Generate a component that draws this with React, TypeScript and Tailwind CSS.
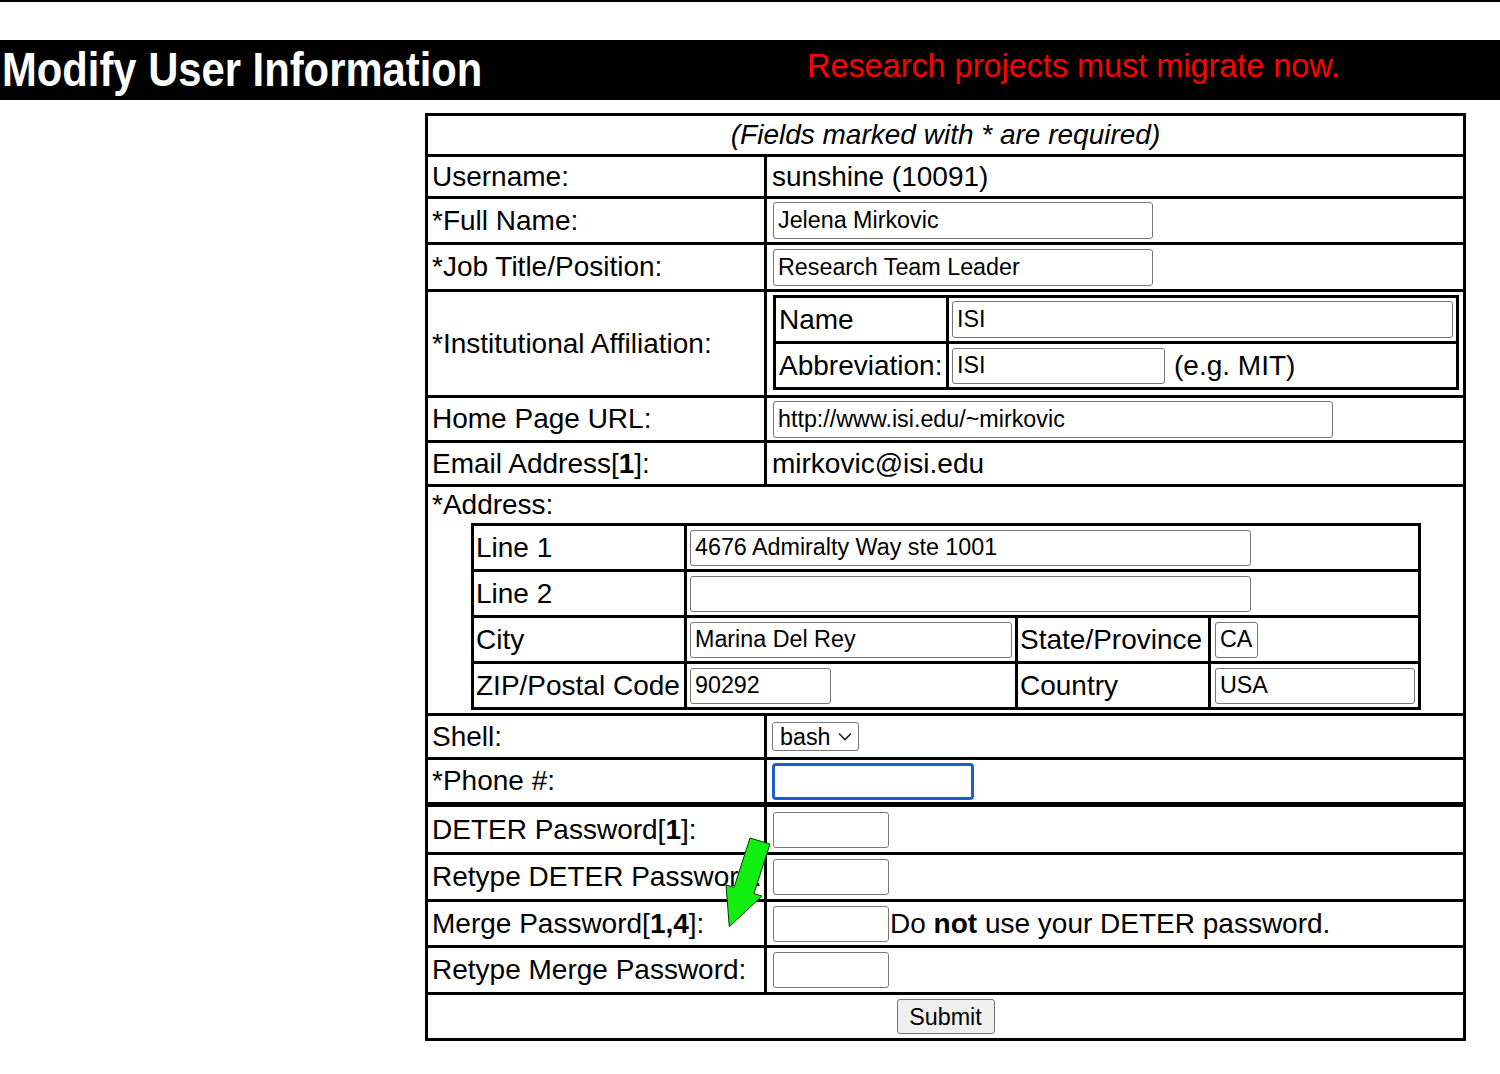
import React from "react";

const FONT = { fontFamily: '"Liberation Sans", Arial, Helvetica, sans-serif' };

function Inp({ v = "", w, h = "h-[37px]" }: { v?: string; w: string; h?: string }) {
  return (
    <input
      readOnly
      defaultValue={v}
      className={`${w} ${h} shrink-0 border border-[#767676] rounded-[3px] px-[4px] text-[23.3px] text-black bg-white outline-none`}
      style={FONT}
    />
  );
}

function Row({
  h,
  label,
  children,
  border = "border-b-[3px]",
}: {
  h: string;
  label: React.ReactNode;
  children?: React.ReactNode;
  border?: string;
}) {
  return (
    <div className={`flex ${h} ${border} border-black`}>
      <div className="w-[339px] shrink-0 border-r-[3px] border-black flex items-center pl-[4px] whitespace-nowrap">
        {label}
      </div>
      <div className="flex-1 flex items-center pl-[5px] whitespace-nowrap">{children}</div>
    </div>
  );
}

export default function App() {
  return (
    <div className="relative w-[1500px] min-h-[1074px] bg-white text-black text-[28px] leading-[32px]" style={FONT}>
      <div className="h-[2px] bg-black" />
      <div className="h-[38px]" />
      <div className="h-[60px] bg-black flex items-center">
        <div className="w-[807px] shrink-0 pl-[2px]">
          <div className="text-white font-bold text-[48px] leading-[54px] whitespace-nowrap origin-left scale-x-[0.87]">
            Modify User Information
          </div>
        </div>
        <div className="text-[#ff0000] text-[32.4px] leading-[36px] pb-[8px] whitespace-nowrap">
          Research projects must migrate now.
        </div>
      </div>

      <div className="ml-[425px] mt-[13px] w-[1041px] border-[3px] border-black">
        <div className="h-[41px] border-b-[3px] border-black flex items-center justify-center italic">
          (Fields marked with * are required)
        </div>
        <Row h="h-[42px]" label="Username:">
          sunshine (10091)
        </Row>
        <Row h="h-[46px]" label="*Full Name:">
          <span className="pl-[1px] flex">
            <Inp v="Jelena Mirkovic" w="w-[380px]" />
          </span>
        </Row>
        <Row h="h-[47px]" label="*Job Title/Position:">
          <span className="pl-[1px] flex">
            <Inp v="Research Team Leader" w="w-[380px]" />
          </span>
        </Row>
        <div className="flex h-[106px] border-b-[3px] border-black">
          <div className="w-[339px] shrink-0 border-r-[3px] border-black flex items-center pl-[4px] whitespace-nowrap">
            *Institutional Affiliation:
          </div>
          <div className="flex-1 flex items-center pl-[6px] pr-[4px] pb-[2px]">
            <div className="w-full border-[3px] border-black">
              <div className="flex h-[46px] border-b-[3px] border-black">
                <div className="w-[173px] shrink-0 border-r-[3px] border-black flex items-center pl-[3px]">Name</div>
                <div className="flex-1 flex items-center px-[3px]">
                  <Inp v="ISI" w="w-full" />
                </div>
              </div>
              <div className="flex h-[43px]">
                <div className="w-[173px] shrink-0 border-r-[3px] border-black flex items-center pl-[3px]">
                  Abbreviation:
                </div>
                <div className="flex-1 flex items-center pl-[3px] whitespace-nowrap">
                  <Inp v="ISI" w="w-[213px]" h="h-[36px]" />
                  <span className="pl-[9px]">(e.g. MIT)</span>
                </div>
              </div>
            </div>
          </div>
        </div>
        <Row h="h-[45px]" label="Home Page URL:">
          <span className="pl-[1px] flex">
            <Inp v="http://www.isi.edu/~mirkovic" w="w-[560px]" />
          </span>
        </Row>
        <Row
          h="h-[44px]"
          label={
            <span>
              Email Address[<b>1</b>]:
            </span>
          }
        >
          mirkovic@isi.edu
        </Row>
        <div className="h-[229px] border-b-[3px] border-black pl-[4px] pt-[2px]">
          <div className="leading-[32px]">*Address:</div>
          <div className="ml-[39px] mt-[2px] w-[950px] border-[3px] border-black">
            <div className="flex h-[46px] border-b-[3px] border-black">
              <div className="w-[213px] shrink-0 border-r-[3px] border-black flex items-center pl-[2px]">Line 1</div>
              <div className="flex-1 flex items-center pl-[3px]">
                <Inp v="4676 Admiralty Way ste 1001" w="w-[561px]" h="h-[36px]" />
              </div>
            </div>
            <div className="flex h-[46px] border-b-[3px] border-black">
              <div className="w-[213px] shrink-0 border-r-[3px] border-black flex items-center pl-[2px]">Line 2</div>
              <div className="flex-1 flex items-center pl-[3px]">
                <Inp v="" w="w-[561px]" h="h-[36px]" />
              </div>
            </div>
            <div className="flex h-[46px] border-b-[3px] border-black">
              <div className="w-[213px] shrink-0 border-r-[3px] border-black flex items-center pl-[2px]">City</div>
              <div className="w-[331px] shrink-0 border-r-[3px] border-black flex items-center pl-[3px]">
                <Inp v="Marina Del Rey" w="w-[322px]" h="h-[36px]" />
              </div>
              <div className="w-[193px] shrink-0 border-r-[3px] border-black flex items-center pl-[2px] whitespace-nowrap">
                State/Province
              </div>
              <div className="flex-1 flex items-center pl-[4px]">
                <Inp v="CA" w="w-[43px]" h="h-[36px]" />
              </div>
            </div>
            <div className="flex h-[43px]">
              <div className="w-[213px] shrink-0 border-r-[3px] border-black flex items-center pl-[2px] whitespace-nowrap">
                ZIP/Postal Code
              </div>
              <div className="w-[331px] shrink-0 border-r-[3px] border-black flex items-center pl-[3px]">
                <Inp v="90292" w="w-[141px]" h="h-[36px]" />
              </div>
              <div className="w-[193px] shrink-0 border-r-[3px] border-black flex items-center pl-[2px]">Country</div>
              <div className="flex-1 flex items-center pl-[4px]">
                <Inp v="USA" w="w-[200px]" h="h-[36px]" />
              </div>
            </div>
          </div>
        </div>
        <Row h="h-[44px]" label="Shell:">
          <div className="h-[29px] w-[87px] border border-[#767676] rounded-[3px] flex items-center justify-between pl-[7px] pr-[6px] text-[23.3px] leading-[26px]">
            <span>bash</span>
            <svg width="14" height="9" viewBox="0 0 14 9" fill="none">
              <path d="M1 1.5 L7 7.5 L13 1.5" stroke="#222" strokeWidth="1.6" />
            </svg>
          </div>
        </Row>
        <Row h="h-[47px]" label="*Phone #:" border="border-b-[5px]">
          <div className="h-[37px] w-[202px] border-[3px] border-[#1a5fd0] rounded-[4px]" />
        </Row>
        <Row
          h="h-[48px]"
          label={
            <span>
              DETER Password[<b>1</b>]:
            </span>
          }
        >
          <span className="pl-[1px] flex">
            <Inp w="w-[116px]" h="h-[36px]" />
          </span>
        </Row>
        <Row h="h-[47px]" label="Retype DETER Password:">
          <span className="pl-[1px] flex">
            <Inp w="w-[116px]" h="h-[36px]" />
          </span>
        </Row>
        <Row
          h="h-[46px]"
          label={
            <span>
              Merge Password[<b>1,4</b>]:
            </span>
          }
        >
          <span className="pl-[1px] flex items-center">
            <Inp w="w-[116px]" h="h-[36px]" />
            <span className="pl-[1px]">
              Do <b>not</b> use your DETER password.
            </span>
          </span>
        </Row>
        <Row h="h-[47px]" label="Retype Merge Password:">
          <span className="pl-[1px] flex">
            <Inp w="w-[116px]" h="h-[36px]" />
          </span>
        </Row>
        <div className="h-[43px] flex items-center justify-center">
          <button className="h-[35px] w-[98px] bg-[#efefef] border border-[#767676] rounded-[3px] text-[23.3px] leading-[26px] text-black" style={FONT}>
            Submit
          </button>
        </div>
      </div>

      <svg
        className="absolute left-[720px] top-[830px]"
        width="60"
        height="105"
        viewBox="0 0 60 105"
      >
        <polygon
          points="30,8 50,14 33.9,63.7 42,66 9.3,96.7 6,55 14.1,57.3"
          fill="#12f012"
          stroke="#0a300a"
          strokeWidth="1"
        />
      </svg>
    </div>
  );
}
